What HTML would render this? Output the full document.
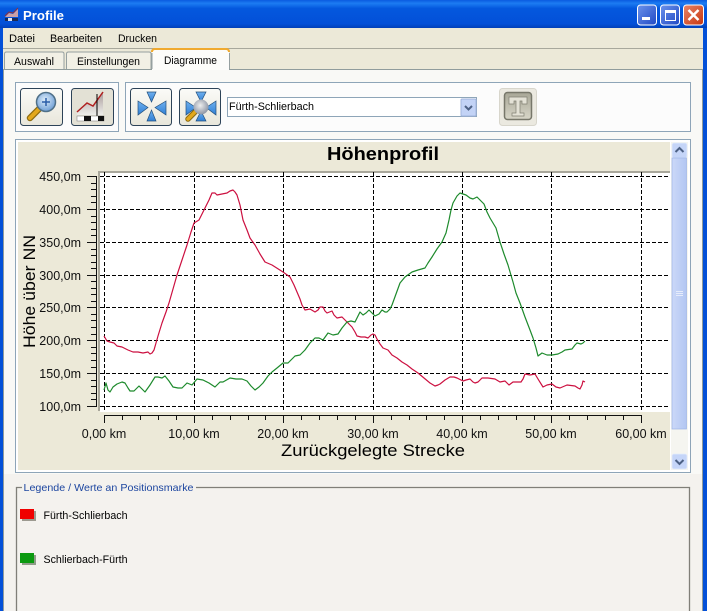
<!DOCTYPE html>
<html><head><meta charset="utf-8"><style>
html,body{margin:0;padding:0;background:#f4f2ee}
svg{display:block;position:absolute;left:0;top:0}
text{font-family:"Liberation Sans",sans-serif;fill:#000}
.u{font-size:11px}
.a{font-size:12.5px;fill:#111}
</style></head><body>
<svg width="707" height="611" viewBox="0 0 707 611" xmlns="http://www.w3.org/2000/svg">
<defs>
<linearGradient id="tb" x1="0" y1="0" x2="0" y2="1"><stop offset="0" stop-color="#0a5be0"/><stop offset=".12" stop-color="#1c7cf2"/><stop offset=".3" stop-color="#0458de"/><stop offset=".85" stop-color="#0350d8"/><stop offset="1" stop-color="#0240b8"/></linearGradient>
<linearGradient id="btn" x1="0" y1="0" x2="0" y2="1"><stop offset="0" stop-color="#fbfbf8"/><stop offset="1" stop-color="#e8e6da"/></linearGradient>
<linearGradient id="wb" x1="0" y1="0" x2="1" y2="1"><stop offset="0" stop-color="#6c93ec"/><stop offset="1" stop-color="#2049c4"/></linearGradient>
<linearGradient id="wc" x1="0" y1="0" x2="1" y2="1"><stop offset="0" stop-color="#e88468"/><stop offset="1" stop-color="#c7360f"/></linearGradient>
<linearGradient id="sb" x1="0" y1="0" x2="1" y2="0"><stop offset="0" stop-color="#cbd8f8"/><stop offset="1" stop-color="#b2c6f2"/></linearGradient>
<linearGradient id="tg" x1="0" y1="0" x2="0" y2="1"><stop offset="0" stop-color="#a8a797"/><stop offset="1" stop-color="#d8d6c8"/></linearGradient>
<linearGradient id="cf" x1="0" y1="0" x2="0" y2="1"><stop offset="0" stop-color="#a89a9a"/><stop offset="1" stop-color="#eeeeea"/></linearGradient>
<linearGradient id="ar" x1="0" y1="0" x2="0" y2="1"><stop offset="0" stop-color="#6fb0ee"/><stop offset="1" stop-color="#2f7fd6"/></linearGradient>
<radialGradient id="gl" cx=".45" cy=".4" r=".6"><stop offset="0" stop-color="#dfeefa"/><stop offset="1" stop-color="#6f9fd6"/></radialGradient>
<radialGradient id="gg" cx=".45" cy=".4" r=".6"><stop offset="0" stop-color="#eeeeee"/><stop offset="1" stop-color="#8d95a4"/></radialGradient>
</defs>

<!-- window frame -->
<rect width="707" height="611" fill="#0350d8"/>
<rect width="707" height="28" fill="url(#tb)"/>
<rect x="3" y="28" width="700" height="583" fill="#ece9d8"/>

<!-- title icon -->
<path d="M5 17 L9 13 L13 14 L18 9 L18 17 Z" fill="#c9a0a8"/>
<path d="M5 16 L9 12 L13 13 L18 8" fill="none" stroke="#8a3040" stroke-width="1"/>
<rect x="5" y="18" width="13" height="3" fill="#1a2a55"/>
<rect x="8" y="18" width="4" height="3" fill="#dfe6f5"/>
<text x="23" y="20" font-size="12.5" font-weight="bold" style="fill:#fff" textLength="41" lengthAdjust="spacingAndGlyphs">Profile</text>

<!-- window buttons -->
<rect x="637.500" y="5" width="19" height="20" rx="3" fill="url(#wb)" stroke="#fff"/>
<rect x="642" y="17" width="8" height="3" fill="#fff"/>
<rect x="660.500" y="5" width="19" height="20" rx="3" fill="url(#wb)" stroke="#fff"/>
<rect x="665.500" y="10.500" width="10" height="10" fill="none" stroke="#fff"/>
<rect x="665" y="10" width="11" height="3" fill="#fff"/>
<rect x="683.500" y="5" width="20" height="20" rx="3" fill="url(#wc)" stroke="#fff"/>
<path d="M688.500 10 L698.500 20 M698.500 10 L688.500 20" stroke="#fff" stroke-width="2.500"/>

<!-- menu -->
<text class="u" x="9" y="42" textLength="26" lengthAdjust="spacingAndGlyphs">Datei</text>
<text class="u" x="50" y="42" textLength="52" lengthAdjust="spacingAndGlyphs">Bearbeiten</text>
<text class="u" x="118" y="42" textLength="39" lengthAdjust="spacingAndGlyphs">Drucken</text>
<rect x="3" y="48" width="700" height="1" fill="#a8a89c"/>

<!-- tabs -->
<rect x="3" y="69" width="700" height="542" fill="#f9f9f6"/>
<rect x="3.500" y="69.500" width="699" height="560" fill="none" stroke="#909c9c"/>
<path d="M4.500 69 V54 Q4.500 52 6.500 52 H62 Q64 52 64 54 V69" fill="#f2f0e5" stroke="#96a0a0"/>
<path d="M66.500 69 V54 Q66.500 52 68.500 52 H149 Q151 52 151 54 V69" fill="#f2f0e5" stroke="#96a0a0"/>
<rect x="152" y="50" width="77" height="20" fill="#fcfcfa"/>
<path d="M152 52 Q152 49 155 49 H226 Q229 49 229 52" fill="none" stroke="#f0aa30" stroke-width="2"/>
<path d="M152 53 V69 M229.500 53 V69" stroke="#96a0a0"/>
<text class="u" x="14" y="65" textLength="40" lengthAdjust="spacingAndGlyphs">Auswahl</text>
<text class="u" x="77" y="65" textLength="63" lengthAdjust="spacingAndGlyphs">Einstellungen</text>
<text class="u" x="164" y="64" textLength="53" lengthAdjust="spacingAndGlyphs">Diagramme</text>

<!-- toolbar groups -->
<rect x="15.500" y="82.500" width="103" height="49" fill="#fcfcfc" stroke="#8ea5b8"/>
<rect x="125.500" y="82.500" width="565" height="49" fill="#fcfcfc" stroke="#8ea5b8"/>

<!-- buttons -->
<rect x="20.500" y="88.500" width="42" height="37" rx="3" fill="url(#btn)" stroke="#2d4358"/>
<rect x="71.500" y="88.500" width="42" height="37" rx="3" fill="#e3e1d5" stroke="#2d4358"/>
<rect x="130.500" y="88.500" width="41" height="37" rx="3" fill="url(#btn)" stroke="#2d4358"/>
<rect x="179.500" y="88.500" width="41" height="37" rx="3" fill="url(#btn)" stroke="#2d4358"/>

<!-- magnifier -->
<path d="M30 118 L40 108" stroke="#8e6c10" stroke-width="6.500" stroke-linecap="round"/>
<path d="M30 118 L40 108" stroke="#e3a81c" stroke-width="4" stroke-linecap="round"/>
<circle cx="46" cy="102" r="9.500" fill="url(#gl)" stroke="#4f7088" stroke-width="1.500"/>
<path d="M42 102 H50 M46 98 V106" stroke="#2a5da8" stroke-width="1.500"/>

<!-- chart icon -->
<path d="M77 112 L87 103 L93 106 L103 92 V115 H77 Z" fill="url(#cf)"/>
<path d="M77 112 L87 103 L93 106 L103 92" fill="none" stroke="#b02020" stroke-width="1.500"/>
<path d="M97 94 V121" stroke="#000" stroke-width="1"/>
<rect x="77" y="116" width="27" height="5" fill="#fff" stroke="#777" stroke-width=".5"/>
<rect x="84" y="116" width="7" height="5" fill="#111"/>
<rect x="98" y="116" width="6" height="5" fill="#111"/>

<!-- arrows -->
<g fill="url(#ar)" stroke="#24507c" stroke-width=".7">
<path d="M147 92 H156 L151.500 102 Z"/><path d="M147 121 H156 L151.500 110 Z"/>
<path d="M138 101 L148 107.500 L138 115 Z"/><path d="M166 101 L155 107.500 L166 115 Z"/>
<path d="M196 92 H206 L201 102 Z"/><path d="M196 121 H206 L201 111 Z"/>
<path d="M186 101 L196 107.500 L186 115 Z"/><path d="M216 101 L206 107.500 L216 115 Z"/>
</g>
<path d="M188 119 L195 112" stroke="#8a6a10" stroke-width="5.500" stroke-linecap="round"/>
<path d="M188 119 L195 112" stroke="#e3a81c" stroke-width="3.500" stroke-linecap="round"/>
<circle cx="201" cy="107" r="7.500" fill="url(#gg)"/>

<!-- combo -->
<rect x="227.500" y="97.500" width="249" height="19" fill="#fff" stroke="#8ea5b8"/>
<text class="u" x="229" y="110" textLength="85" lengthAdjust="spacingAndGlyphs">Fürth-Schlierbach</text>
<rect x="461" y="99" width="15" height="17" rx="1" fill="#c3d3f6" stroke="#a0b4de"/>
<path d="M465 106 L468.500 109.500 L472 106" fill="none" stroke="#4d6185" stroke-width="2"/>

<!-- T button -->
<rect x="499.500" y="88.500" width="37" height="37" rx="3" fill="#ebe9e0" stroke="#d8d6cc"/>
<rect x="504.500" y="92.500" width="27" height="27" rx="3" fill="url(#tg)" stroke="#77776a" stroke-width="1.500"/>
<path d="M509 97 H527 V104 H522 V101 H520 V113 H524 V116 H512 V113 H516 V101 H514 V104 H509 Z" fill="#e4e2d6" stroke="#807f72" stroke-width=".7"/>

<!-- chart panel -->
<rect x="15.500" y="139.500" width="675" height="333" fill="#fff" stroke="#8ea5b8"/>
<rect x="18" y="142" width="652" height="328" fill="#ece9d8"/>
<rect x="100" y="172" width="570" height="240" fill="#fff"/>
<rect x="98" y="171" width="572" height="2" fill="#a9a79b"/>
<rect x="98" y="171" width="2" height="240" fill="#a9a79b"/>

<text x="327" y="160" font-size="18" font-weight="bold" textLength="112" lengthAdjust="spacingAndGlyphs">Höhenprofil</text>

<!-- grid -->
<g stroke="#000" stroke-width="1" stroke-dasharray="4 2" shape-rendering="crispEdges" fill="none">
<path d="M100 176.500 H668 M100 209.500 H668 M100 242.500 H668 M100 275.500 H668 M100 307.500 H668 M100 340.500 H668 M100 373.500 H668 M100 406.500 H668"/>
<path d="M104.500 172 V411 M194.500 172 V411 M283.500 172 V411 M373.500 172 V411 M462.500 172 V411 M551.500 172 V411 M641.500 172 V411"/>
</g>

<!-- y axis -->
<g stroke="#111" stroke-width="1" shape-rendering="crispEdges" fill="none">
<path d="M96.500 176 V407"/>
<path d="M87 176.500 H96 M87 209.500 H96 M87 242.500 H96 M87 275.500 H96 M87 307.500 H96 M87 340.500 H96 M87 373.500 H96 M87 406.500 H96"/>
<path d="M91 183.500 H96 M91 189.500 H96 M91 196.500 H96 M91 202.500 H96 M91 216.500 H96 M91 222.500 H96 M91 229.500 H96 M91 235.500 H96 M91 249.500 H96 M91 255.500 H96 M91 262.500 H96 M91 268.500 H96 M91 281.500 H96 M91 288.500 H96 M91 294.500 H96 M91 301.500 H96 M91 314.500 H96 M91 320.500 H96 M91 327.500 H96 M91 334.500 H96 M91 347.500 H96 M91 353.500 H96 M91 360.500 H96 M91 367.500 H96 M91 380.500 H96 M91 386.500 H96 M91 393.500 H96 M91 399.500 H96"/>
<!-- x axis -->
<path d="M104 415.500 H642"/>
<path d="M104.500 415 V423 M194.500 415 V423 M283.500 415 V423 M373.500 415 V423 M462.500 415 V423 M551.500 415 V423 M641.500 415 V423"/>
<path d="M122.500 415 V420 M140.500 415 V420 M158.500 415 V420 M176.500 415 V420 M212.500 415 V420 M230.500 415 V420 M248.500 415 V420 M265.500 415 V420 M301.500 415 V420 M319.500 415 V420 M337.500 415 V420 M355.500 415 V420 M391.500 415 V420 M409.500 415 V420 M426.500 415 V420 M444.500 415 V420 M480.500 415 V420 M498.500 415 V420 M516.500 415 V420 M534.500 415 V420 M569.500 415 V420 M587.500 415 V420 M605.500 415 V420 M623.500 415 V420"/>
</g>

<!-- y labels -->
<g text-anchor="end">
<text class="a" x="81" y="181">450,0m</text>
<text class="a" x="81" y="214">400,0m</text>
<text class="a" x="81" y="247">350,0m</text>
<text class="a" x="81" y="280">300,0m</text>
<text class="a" x="81" y="312">250,0m</text>
<text class="a" x="81" y="345">200,0m</text>
<text class="a" x="81" y="378">150,0m</text>
<text class="a" x="81" y="411">100,0m</text>
</g>
<!-- x labels -->
<g text-anchor="middle">
<text class="a" x="104" y="438">0,00 km</text>
<text class="a" x="194" y="438">10,00 km</text>
<text class="a" x="283" y="438">20,00 km</text>
<text class="a" x="373" y="438">30,00 km</text>
<text class="a" x="462" y="438">40,00 km</text>
<text class="a" x="551" y="438">50,00 km</text>
<text class="a" x="641" y="438">60,00 km</text>
</g>
<text x="281" y="456" font-size="17" textLength="184" lengthAdjust="spacingAndGlyphs">Zurückgelegte Strecke</text>
<text transform="translate(35,348) rotate(-90)" x="0" y="0" font-size="17" textLength="113" lengthAdjust="spacingAndGlyphs">Höhe über NN</text>

<!-- curves -->
<polyline fill="none" stroke="#cc1040" stroke-width="1.200" stroke-linejoin="round" points="104,336 107,341 110,342 114,343 117,346 122,347 128,350 133,352 138,352 143,353 148,352 150,354 152,353 154,350 158,336 162,323 166,312 169,303 177,275 182,260 187,245 191,232 194,223 199,220 205,208 209,200 212,193 215,193 217,195 222,194 227,193 230,191 233,190 235,192 237,195 240,205 243,220 247,230 250,238 255,245 260,254 265,262 272,265 283,272 290,277 294,285 297,292 300,299 302,305 305,310 310,309 315,312 318,310 320,307 323,307 325,311 327,313 332,311 334,315 337,318 342,317 347,322 352,327 355,332 357,336 361,337 365,337 368,338 371,335 373,334 375,335 377,339 380,344 383,348 388,350 392,355 397,358 402,362 407,365 412,369 418,373 424,378 430,383 435,386 438,385 440,384 445,380 450,377 454,377 457,378 463,381 466,380 470,379 473,382 475,383 478,382 482,378 488,378 495,379 500,382 505,381 509,385 513,382 521,382 523,379 525,374 530,375 535,374 538,379 543,387 547,385 552,384 556,387 560,388 567,385 575,386 578,388 580,389 582,385 583,381 585,382"/>
<polyline fill="none" stroke="#1d8a2c" stroke-width="1.200" stroke-linejoin="round" points="104,390 106,383 108,390 110,392 113,387 117,384 122,382 125,383 128,388 130,391 134,391 139,386 142,389 145,392 150,385 155,377 158,377 162,378 165,376 169,381 173,387 178,388 182,388 187,383 192,385 197,379 203,380 209,383 215,387 220,382 223,382 230,378 236,379 242,379 247,381 251,386 255,390 259,387 263,383 268,376 272,372 277,368 283,363 288,363 292,359 295,356 300,355 305,350 310,343 315,338 319,338 323,340 328,333 333,335 338,334 342,328 347,322 351,321 355,322 358,316 360,312 363,315 366,313 369,310 372,313 375,316 379,314 382,310 385,312 387,312 390,309 392,305 396,294 400,283 405,277 412,272 418,270 425,268 428,263 432,257 437,249 442,242 446,233 449,220 451,210 453,203 457,196 460,193 466,195 470,198 473,199 477,197 481,201 484,204 487,212 490,218 496,228 500,242 504,254 508,265 513,282 516,293 520,303 525,317 530,330 533,338 536,348 538,356 542,353 547,355 552,355 558,354 562,352 565,350 572,349 575,345 577,343 581,344 583,343 585,341"/>

<!-- scrollbar -->
<rect x="671" y="142" width="17" height="328" fill="#f5f5f0"/>
<rect x="672" y="143" width="15" height="15" rx="2" fill="#c5d5f8" stroke="#e4ebfb" stroke-width=".7"/>
<path d="M675.500 152 L679.500 148 L683.500 152" fill="none" stroke="#4d6185" stroke-width="2"/>
<rect x="672" y="158" width="14.500" height="271" fill="url(#sb)" stroke="#9db4e6" stroke-width=".7"/>
<path d="M676 291.500 H683 M676 293.500 H683 M676 295.500 H683" stroke="#e6ecfb" stroke-width="1"/>
<rect x="672" y="454" width="15" height="15" rx="2" fill="#c5d5f8" stroke="#e4ebfb" stroke-width=".7"/>
<path d="M675.500 460 L679.500 464 L683.500 460" fill="none" stroke="#4d6185" stroke-width="2"/>

<!-- legend area -->
<rect x="4" y="474" width="698" height="137" fill="#f4f2ee"/>
<path d="M16.500 611 V487.500 H22" fill="none" stroke="#807f78" stroke-width="1.300"/>
<path d="M196 487.500 H689.500 V611" fill="none" stroke="#807f78" stroke-width="1.300"/>
<text x="23.500" y="491" font-size="10.500" style="fill:#1d46a0" textLength="170" lengthAdjust="spacingAndGlyphs">Legende / Werte an Positionsmarke</text>
<rect x="22" y="511" width="14" height="10" fill="#9c9a90"/>
<rect x="20" y="509" width="14" height="10" fill="#f00000"/>
<rect x="22" y="555" width="14" height="10" fill="#8f9c88"/>
<rect x="20" y="553" width="14" height="10" fill="#0b9a10"/>
<text class="u" x="43.500" y="519" textLength="84" lengthAdjust="spacingAndGlyphs">Fürth-Schlierbach</text>
<text class="u" x="43.500" y="563" textLength="84" lengthAdjust="spacingAndGlyphs">Schlierbach-Fürth</text>
</svg>
</body></html>
